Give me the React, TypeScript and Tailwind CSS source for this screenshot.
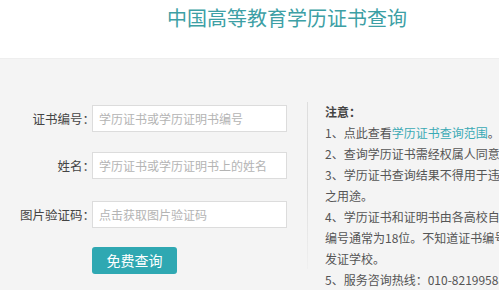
import React from "react";

const font = { fontFamily: '"Noto Sans CJK SC", "Noto Sans", sans-serif' };

function Row({ label, placeholder, className }: { label: string; placeholder: string; className?: string }) {
  return (
    <div className={"flex items-center " + (className || "")}>
      <div className="w-[95px] shrink-0 text-right text-[12.5px] text-[#444] leading-[27px] whitespace-nowrap">{label}</div>
      <input
        className="ml-[-3px] w-[195px] h-[27px] border border-[#dcdcdc] bg-white px-[6px] text-[12px] text-[#444] placeholder:text-[#b4b4b4] outline-none"
        placeholder={placeholder}
      />
    </div>
  );
}

export default function App() {
  return (
    <div className="w-[499px] h-[290px] overflow-hidden bg-[#f4f4f4]" style={font}>
      <div className="h-[59px] bg-white border-b border-[#eeeeee] pl-[167px] pt-[4px]">
        <div className="text-[20px] leading-[28px] text-[#3d9fa5] whitespace-nowrap">中国高等教育学历证书查询</div>
      </div>
      <div className="flex">
        <div className="w-[307px] shrink-0 pt-[46px]">
          <Row label="证书编号：" placeholder="学历证书或学历证明书编号" />
          <Row label="姓名：" placeholder="学历证书或学历证明书上的姓名" className="mt-[20px]" />
          <Row label="图片验证码：" placeholder="点击获取图片验证码" className="mt-[22px]" />
          <div className="pl-[92px] mt-[19px]">
            <button className="w-[85px] h-[27px] rounded-[3px] bg-[#2fa8b2] text-white text-[14px] leading-[27px]">免费查询</button>
          </div>
        </div>
        <div className="w-px h-[167px] mt-[43px] shrink-0 bg-gradient-to-b from-[#dedede] via-[#dcdcdc] to-[#f0f0f0]" />
        <div className="pl-[17px] pt-[42px] text-[12px] leading-[21px] text-[#555] whitespace-nowrap">
          <div className="font-bold text-[#444]">注意：</div>
          <div>1、点此查看<span className="text-[#3aaab4]">学历证书查询范围</span>。</div>
          <div>2、查询学历证书需经权属人同意。</div>
          <div>3、学历证书查询结果不得用于违法犯罪</div>
          <div>之用途。</div>
          <div>4、学历证书和证明书由各高校自行印制，</div>
          <div>编号通常为18位。不知道证书编号的，请咨询</div>
          <div>发证学校。</div>
          <div>5、服务咨询热线：010-82199588</div>
        </div>
      </div>
    </div>
  );
}
